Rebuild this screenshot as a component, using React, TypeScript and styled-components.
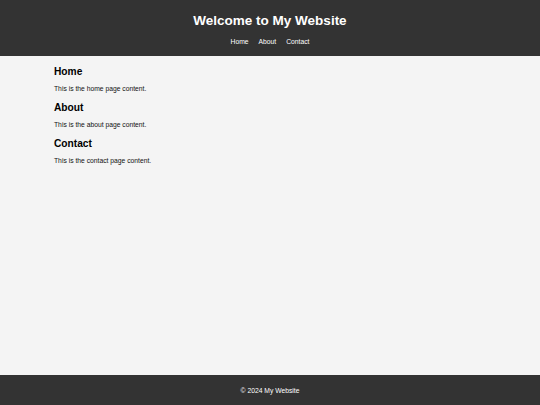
import styled, { createGlobalStyle } from "styled-components";

const GlobalStyle = createGlobalStyle`
  html, body {
    margin: 0;
    padding: 0;
    height: 100%;
  }
  body {
    background: #f4f4f4;
    font-family: "Liberation Sans", Arial, sans-serif;
    color: #000;
  }
  #root {
    min-height: 100%;
    display: flex;
    flex-direction: column;
  }
`;

const Header = styled.header`
  background: #333;
  color: #fff;
  height: 56px;
  box-sizing: border-box;
  padding-top: 12.5px;
  text-align: center;
`;

const Title = styled.h1`
  margin: 0;
  font-size: 13.5px;
  line-height: 15px;
  font-weight: bold;
`;

const Nav = styled.nav`
  margin-top: 10.5px;
  display: flex;
  justify-content: center;
  gap: 10px;
`;

const NavLink = styled.a`
  color: #fff;
  text-decoration: none;
  font-size: 6.75px;
  line-height: 8px;
`;

const Main = styled.main`
  flex: 1;
  width: 80%;
  margin: 0 auto;
  box-sizing: border-box;
  padding-top: 10px;
`;

const Section = styled.section`
  margin-bottom: 9px;
`;

const Heading = styled.h2`
  margin: 0 0 7px;
  font-size: 10.2px;
  line-height: 12px;
  font-weight: bold;
`;

const Text = styled.p`
  margin: 0;
  font-size: 6.75px;
  line-height: 8px;
  color: #111;
`;

const Footer = styled.footer`
  background: #333;
  color: #fff;
  height: 30px;
  display: flex;
  align-items: center;
  justify-content: center;
  font-size: 6.75px;
`;

const sections = [
  { id: "home", title: "Home", text: "This is the home page content." },
  { id: "about", title: "About", text: "This is the about page content." },
  { id: "contact", title: "Contact", text: "This is the contact page content." },
];

export default function App() {
  return (
    <>
      <GlobalStyle />
      <Header>
        <Title>Welcome to My Website</Title>
        <Nav>
          <NavLink href="#home">Home</NavLink>
          <NavLink href="#about">About</NavLink>
          <NavLink href="#contact">Contact</NavLink>
        </Nav>
      </Header>
      <Main>
        {sections.map((s) => (
          <Section key={s.id} id={s.id}>
            <Heading>{s.title}</Heading>
            <Text>{s.text}</Text>
          </Section>
        ))}
      </Main>
      <Footer>© 2024 My Website</Footer>
    </>
  );
}
